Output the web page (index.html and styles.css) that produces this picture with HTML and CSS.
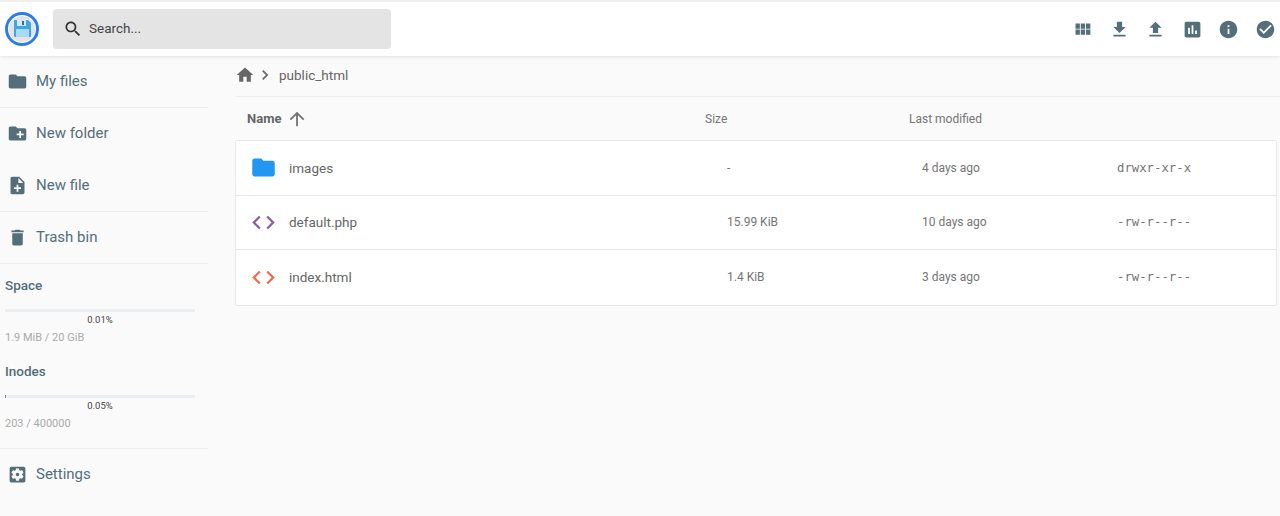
FILE: index.html
```html
<!DOCTYPE html>
<html lang="en">
<head>
  <meta charset="UTF-8">
  <meta name="viewport" content="width=device-width, initial-scale=1.0">
  <title>File Browser</title>
  <link rel="stylesheet" href="styles.css">
</head>
<body>
  <header class="top-bar">
    <div class="logo">
      <svg viewBox="0 0 34 34" width="34" height="34">
        <circle cx="17" cy="17" r="15.5" fill="#fff" stroke="#2b7de9" stroke-width="3"/>
        <circle cx="17" cy="17" r="13" fill="#e4e4e4"/>
        <path d="M10 8h13l3 3v13a1 1 0 0 1-1 1H10a1 1 0 0 1-1-1V9a1 1 0 0 1 1-1z" fill="#42a5e5"/>
        <rect x="12" y="8" width="9" height="6" fill="#cfeafa"/>
        <rect x="17" y="9" width="2" height="4" fill="#2b6f9e"/>
        <rect x="11" y="17" width="13" height="8" fill="#a9daf5"/>
      </svg>
    </div>
    <div class="search">
      <svg class="search-icon" viewBox="0 0 24 24"><path d="M15.5 14h-.79l-.28-.27C15.41 12.59 16 11.11 16 9.5 16 5.91 13.09 3 9.5 3S3 5.91 3 9.5 5.91 16 9.5 16c1.61 0 3.09-.59 4.23-1.57l.27.28v.79l5 4.99L20.49 19l-4.99-5zm-6 0C7.01 14 5 11.99 5 9.5S7.01 5 9.5 5 14 7.01 14 9.5 11.99 14 9.5 14z"/></svg>
      <span>Search...</span>
    </div>
    <div class="actions">
      <svg class="icon" viewBox="0 0 24 24"><path d="M4 11h5V5H4v6zm0 7h5v-6H4v6zm6 0h5v-6h-5v6zm6 0h5v-6h-5v6zm-6-7h5V5h-5v6zm6-6v6h5V5h-5z"/></svg>
      <svg class="icon" viewBox="0 0 24 24"><path d="M19 9h-4V3H9v6H5l7 7 7-7zM5 18v2h14v-2H5z"/></svg>
      <svg class="icon" viewBox="0 0 24 24"><path d="M9 16h6v-6h4l-7-7-7 7h4v6zm-4 2h14v2H5v-2z"/></svg>
      <svg class="icon" viewBox="0 0 24 24"><path d="M19 3H5c-1.1 0-2 .9-2 2v14c0 1.1.9 2 2 2h14c1.1 0 2-.9 2-2V5c0-1.1-.9-2-2-2zM9 17H7v-7h2v7zm4 0h-2V7h2v10zm4 0h-2v-4h2v4z"/></svg>
      <svg class="icon" viewBox="0 0 24 24"><path d="M12 2C6.48 2 2 6.48 2 12s4.48 10 10 10 10-4.48 10-10S17.52 2 12 2zm1 15h-2v-6h2v6zm0-8h-2V7h2v2z"/></svg>
      <svg class="icon" viewBox="0 0 24 24"><path d="M12 2C6.48 2 2 6.48 2 12s4.48 10 10 10 10-4.48 10-10S17.52 2 12 2zm-2 15l-5-5 1.41-1.41L10 14.17l7.59-7.59L19 8l-9 9z"/></svg>
    </div>
  </header>

  <div class="layout">
    <nav class="sidebar">
      <div class="nav-group">
        <a class="nav-item">
          <svg class="icon" viewBox="0 0 24 24"><path d="M10 4H4c-1.1 0-1.99.9-1.99 2L2 18c0 1.1.9 2 2 2h16c1.1 0 2-.9 2-2V8c0-1.1-.9-2-2-2h-8l-2-2z"/></svg>
          <span>My files</span>
        </a>
      </div>
      <div class="nav-group">
        <a class="nav-item">
          <svg class="icon" viewBox="0 0 24 24"><path d="M20 6h-8l-2-2H4c-1.11 0-1.99.89-1.99 2L2 18c0 1.11.89 2 2 2h16c1.11 0 2-.89 2-2V8c0-1.11-.89-2-2-2zm-1 8h-3v3h-2v-3h-3v-2h3V9h2v3h3v2z"/></svg>
          <span>New folder</span>
        </a>
        <a class="nav-item">
          <svg class="icon" viewBox="0 0 24 24"><path d="M14 2H6c-1.1 0-1.99.9-1.99 2L4 20c0 1.1.89 2 1.99 2H18c1.1 0 2-.9 2-2V8l-6-6zm2 14h-3v3h-2v-3H8v-2h3v-3h2v3h3v2zm-3-7V3.5L18.5 9H13z"/></svg>
          <span>New file</span>
        </a>
      </div>
      <div class="nav-group">
        <a class="nav-item">
          <svg class="icon" viewBox="0 0 24 24"><path d="M6 19c0 1.1.9 2 2 2h8c1.1 0 2-.9 2-2V7H6v12zM19 4h-3.5l-1-1h-5l-1 1H5v2h14V4z"/></svg>
          <span>Trash bin</span>
        </a>
      </div>
      <div class="nav-group usage">
        <div class="usage-block">
          <h4>Space</h4>
          <div class="bar"></div>
          <div class="percent">0.01%</div>
          <div class="amount">1.9 MiB / 20 GiB</div>
        </div>
        <div class="usage-block">
          <h4>Inodes</h4>
          <div class="bar"><div class="bar-fill" style="width: 1px"></div></div>
          <div class="percent">0.05%</div>
          <div class="amount">203 / 400000</div>
        </div>
      </div>
      <div class="nav-group">
        <a class="nav-item">
          <svg class="icon" viewBox="0 0 24 24"><path d="M12 10c-1.1 0-2 .9-2 2s.9 2 2 2 2-.9 2-2-.9-2-2-2zm7-7H5c-1.11 0-2 .9-2 2v14c0 1.1.89 2 2 2h14c1.11 0 2-.9 2-2V5c0-1.1-.89-2-2-2zm-1.75 9c0 .23-.02.46-.05.68l1.48 1.16c.13.11.17.3.08.45l-1.4 2.42c-.09.15-.27.21-.43.15l-1.74-.7c-.36.28-.76.51-1.18.69l-.26 1.85c-.03.17-.18.3-.35.3h-2.8c-.17 0-.32-.13-.35-.29l-.26-1.85c-.43-.18-.82-.41-1.18-.69l-1.74.7c-.16.06-.34 0-.43-.15l-1.4-2.42c-.09-.15-.05-.34.08-.45l1.48-1.16c-.03-.23-.05-.46-.05-.69 0-.23.02-.46.05-.68l-1.48-1.16c-.13-.11-.17-.3-.08-.45l1.4-2.42c.09-.15.27-.21.43-.15l1.74.7c.36-.28.76-.51 1.18-.69l.26-1.85c.03-.17.18-.3.35-.3h2.8c.17 0 .32.13.35.29l.26 1.85c.43.18.82.41 1.18.69l1.74-.7c.16-.06.34 0 .43.15l1.4 2.42c.09.15.05.34-.08.45l-1.48 1.16c.03.23.05.46.05.69z"/></svg>
          <span>Settings</span>
        </a>
      </div>
    </nav>

    <main class="content">
      <div class="breadcrumbs">
        <svg class="crumb-home" viewBox="0 0 24 24"><path d="M10 20v-6h4v6h5v-8h3L12 3 2 12h3v8z"/></svg>
        <svg class="crumb-sep" viewBox="0 0 24 24"><path d="M10 6L8.59 7.41 13.17 12l-4.58 4.59L10 18l6-6z"/></svg>
        <span>public_html</span>
      </div>

      <div class="list-head">
        <div class="head-name">
          <span>Name</span>
          <svg viewBox="0 0 24 24"><path d="M4 12l1.41 1.41L11 7.83V20h2V7.83l5.58 5.59L20 12l-8-8-8 8z"/></svg>
        </div>
        <div class="head-size">Size</div>
        <div class="head-date">Last modified</div>
      </div>

      <div class="file-list">
        <div class="file-row">
          <svg class="file-icon folder" viewBox="0 0 24 24"><path d="M10 4H4c-1.1 0-1.99.9-1.99 2L2 18c0 1.1.9 2 2 2h16c1.1 0 2-.9 2-2V8c0-1.1-.9-2-2-2h-8l-2-2z"/></svg>
          <div class="file-name">images</div>
          <div class="file-size">-</div>
          <div class="file-date">4 days ago</div>
          <div class="file-perm">drwxr-xr-x</div>
        </div>
        <div class="file-row">
          <svg class="file-icon php" viewBox="0 0 24 24"><path d="M9.4 16.6L4.8 12l4.6-4.6L8 6l-6 6 6 6 1.4-1.4zm5.2 0l4.6-4.6-4.6-4.6L16 6l6 6-6 6-1.4-1.4z"/></svg>
          <div class="file-name">default.php</div>
          <div class="file-size">15.99 KiB</div>
          <div class="file-date">10 days ago</div>
          <div class="file-perm">-rw-r--r--</div>
        </div>
        <div class="file-row">
          <svg class="file-icon html" viewBox="0 0 24 24"><path d="M9.4 16.6L4.8 12l4.6-4.6L8 6l-6 6 6 6 1.4-1.4zm5.2 0l4.6-4.6-4.6-4.6L16 6l6 6-6 6-1.4-1.4z"/></svg>
          <div class="file-name">index.html</div>
          <div class="file-size">1.4 KiB</div>
          <div class="file-date">3 days ago</div>
          <div class="file-perm">-rw-r--r--</div>
        </div>
      </div>
    </main>
  </div>
</body>
</html>
```

FILE: styles.css
```css
body {
  margin: 0;
  padding: 0;
  font-family: Roboto, "Liberation Sans", sans-serif;
  background-color: #fafafa;
  color: #546e7a;
  height: 516px;
  overflow: hidden;
}

.icon {
  width: 21px;
  height: 21px;
  fill: #546e7a;
  flex: none;
}

.top-bar {
  display: flex;
  align-items: center;
  height: 54px;
  background-color: #fff;
  border-top: 2px solid #f0f0f0;
  box-shadow: 0 1px 3px rgba(0, 0, 0, 0.1);
  position: relative;
}

.logo {
  display: flex;
  margin-left: 5px;
  margin-right: 14px;
}

.search {
  display: flex;
  align-items: center;
  width: 338px;
  height: 40px;
  margin-top: -1px;
  background-color: #e4e4e4;
  border-radius: 4px;
  color: #444;
  font-size: 13.5px;
}

.search span {
  padding-bottom: 2px;
}

.search-icon {
  width: 20px;
  height: 20px;
  fill: #333;
  margin-left: 10px;
  margin-right: 6px;
}

.actions {
  display: flex;
  gap: 15.5px;
  margin-left: auto;
  margin-right: 4.5px;
}

.layout {
  display: flex;
}

.sidebar {
  width: 208px;
  flex: none;
}

.nav-group {
  border-bottom: 1px solid #eee;
}

.nav-group:last-child {
  border-bottom: none;
}

.nav-item {
  display: flex;
  align-items: center;
  gap: 8px;
  height: 51.3px;
  padding-left: 7px;
  font-size: 15px;
}

.nav-item span {
  padding-bottom: 1px;
}

.usage {
  padding: 12.5px 0 17px 5px;
}

.usage-block + .usage-block {
  margin-top: 18px;
}

.usage h4 {
  margin: 0 0 16px;
  font-size: 13.5px;
  font-weight: 500;
  line-height: 16px;
  color: #546e7a;
}

.bar {
  width: 190px;
  height: 3px;
  background-color: #eceff1;
}

.bar-fill {
  height: 3px;
  background-color: #40a4d8;
}

.percent {
  width: 190px;
  margin-top: 1px;
  text-align: center;
  font-size: 9.5px;
  line-height: 14px;
  color: #444;
}

.amount {
  margin-top: 4px;
  font-size: 11px;
  line-height: 14px;
  color: #aaa;
}

.content {
  flex: 1;
  margin-left: 28px;
  color: #666;
}

.breadcrumbs {
  display: flex;
  align-items: center;
  height: 38px;
  padding-bottom: 2px;
  border-bottom: 1px solid #eee;
  font-size: 13.5px;
  color: #666;
}

.crumb-home {
  width: 20px;
  height: 20px;
  fill: #666;
  margin-left: -1px;
}

.crumb-sep {
  width: 20px;
  height: 20px;
  fill: #666;
  margin-right: 4px;
}

.list-head {
  display: grid;
  grid-template-columns: 458px 204px 1fr;
  align-items: center;
  height: 43px;
  padding-left: 11px;
  font-size: 12px;
  color: #757575;
}

.head-name {
  display: flex;
  align-items: center;
  gap: 5px;
  font-size: 13px;
  font-weight: 700;
  color: #666;
}

.head-name svg {
  width: 22px;
  height: 22px;
  fill: #757575;
}

.file-list {
  width: 1040px;
  margin-left: -1px;
  background-color: #fff;
  border: 1px solid #e8e8e8;
  border-radius: 2px;
}

.file-row {
  display: grid;
  grid-template-columns: 53px 438px 195px 195px 1fr;
  align-items: center;
  box-sizing: border-box;
  height: 54.5px;
  border-bottom: 1px solid #e8e8e8;
  font-size: 12px;
  color: #757575;
}

.file-row:last-child {
  border-bottom: none;
}

.file-icon {
  width: 27px;
  height: 27px;
  margin-left: 13.5px;
}

.folder {
  fill: #2196f3;
}

.php {
  fill: #8e5ba8;
}

.html {
  fill: #ef6c4a;
}

.file-name {
  font-size: 13.5px;
  color: #666;
}

.file-perm {
  font-family: "DejaVu Sans Mono", monospace;
  font-size: 12.3px;
}
```
